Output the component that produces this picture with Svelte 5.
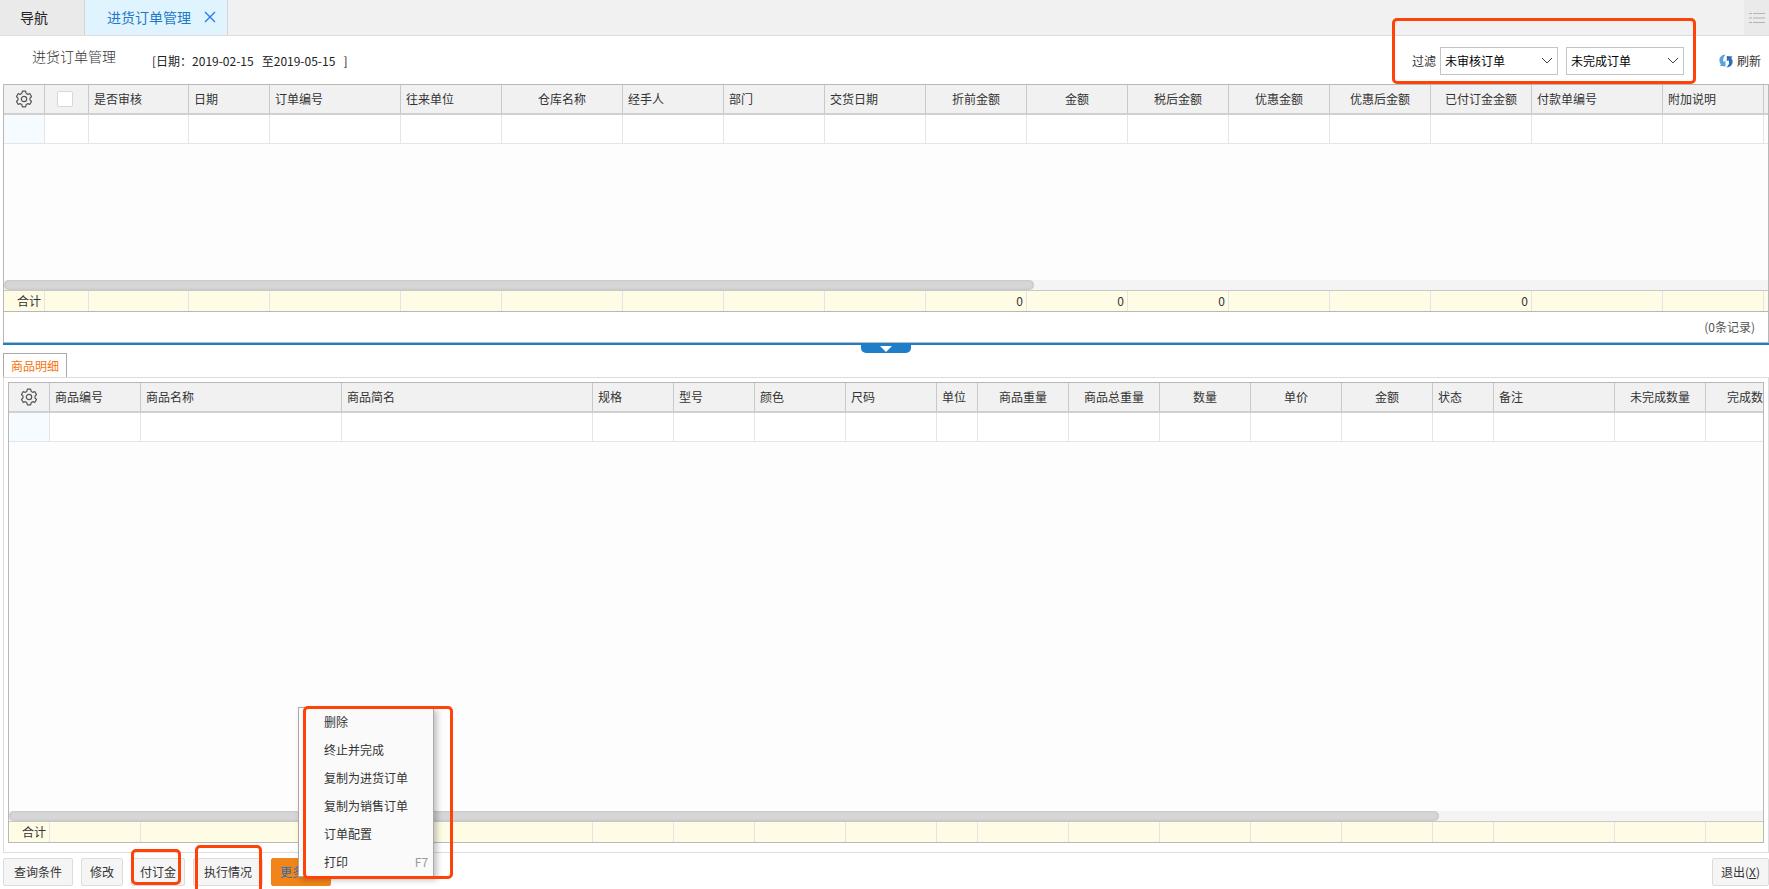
<script>
  const orderColumns = [
    { title: "", width: 41 },
    { title: "", width: 44, check: true },
    { title: "是否审核", width: 100 },
    { title: "日期", width: 81 },
    { title: "订单编号", width: 131 },
    { title: "往来单位", width: 101 },
    { title: "仓库名称", width: 121, center: true },
    { title: "经手人", width: 101 },
    { title: "部门", width: 101 },
    { title: "交货日期", width: 101 },
    { title: "折前金额", width: 101, center: true, total: 0 },
    { title: "金额", width: 101, center: true, total: 0 },
    { title: "税后金额", width: 101, center: true, total: 0 },
    { title: "优惠金额", width: 101, center: true },
    { title: "优惠后金额", width: 101, center: true },
    { title: "已付订金金额", width: 101, center: true, total: 0 },
    { title: "付款单编号", width: 131 },
    { title: "附加说明", width: 101 },
    { title: "", width: 101 }
  ]
  const detailColumns = [
    { title: "", width: 41 },
    { title: "商品编号", width: 91 },
    { title: "商品名称", width: 201 },
    { title: "商品简名", width: 251 },
    { title: "规格", width: 81 },
    { title: "型号", width: 81 },
    { title: "颜色", width: 91 },
    { title: "尺码", width: 91 },
    { title: "单位", width: 41 },
    { title: "商品重量", width: 91, center: true },
    { title: "商品总重量", width: 91, center: true },
    { title: "数量", width: 91, center: true },
    { title: "单价", width: 91, center: true },
    { title: "金额", width: 91, center: true },
    { title: "状态", width: 61 },
    { title: "备注", width: 121 },
    { title: "未完成数量", width: 91, center: true },
    { title: "完成数量", width: 91, center: true }
  ]
  const menu = [
    { text: "删除" },
    { text: "终止并完成" },
    { text: "复制为进货订单" },
    { text: "复制为销售订单" },
    { text: "订单配置" },
    { text: "打印", key: "F7" }
  ]
  let audit = $state("未审核订单")
  let finish = $state("未完成订单")
  let menuOpen = $state(true)

  const sum = cols => cols.reduce((a, c) => a + c.width, 0)
</script>

{#snippet cols(columns)}
  <colgroup>
    {#each columns as c}
      <col style="width: {c.width}px">
    {/each}
  </colgroup>
{/snippet}

{#snippet grid(columns, thumb)}
  <table style="width: {sum(columns)}px">
    {@render cols(columns)}
    <thead>
      <tr>
        {#each columns as c, i}
          <th class:center={c.center || i == 0} class:check={c.check}>
            {#if i == 0}
              <button class="gear" aria-label="列配置">
                <svg width="18" height="18" viewBox="0 0 18 18" fill="none" stroke="#555" stroke-width="1.2" stroke-linejoin="round">
                  <path d="M7.4 1.2h3.2l.6 2.2 1.5.9 2.2-.6 1.6 2.8L15 8.1v1.8l1.5 1.6-1.6 2.8-2.2-.6-1.5.9-.6 2.2H7.4l-.6-2.2-1.5-.9-2.2.6-1.6-2.8L3 9.9V8.1L1.5 6.5l1.6-2.8 2.2.6 1.5-.9z" />
                  <circle cx="9" cy="9" r="2.7" />
                </svg>
              </button>
            {:else if c.check}
              <input type="checkbox" aria-label="全选">
            {:else}
              {c.title}
            {/if}
          </th>
        {/each}
      </tr>
    </thead>
    <tbody>
      <tr>
        {#each columns as c}
          <td></td>
        {/each}
      </tr>
    </tbody>
  </table>
  <div class="space"></div>
  <div class="track"><div class="thumb" style="width: {thumb}%"></div></div>
  <table class="totals" style="width: {sum(columns)}px">
    {@render cols(columns)}
    <tbody>
      <tr>
        {#each columns as c, i}
          <td>{i == 0 ? "合计" : c.total ?? ""}</td>
        {/each}
      </tr>
    </tbody>
  </table>
{/snippet}

<main>
  <nav>
    <a class="tab" href="#home">导航</a>
    <div class="tab active">
      <a href="#orders">进货订单管理</a>
      <button aria-label="关闭">
        <svg width="12" height="12" viewBox="0 0 12 12" stroke="#2b78f0" stroke-width="1.4">
          <path d="M1 1l10 10M11 1L1 11" />
        </svg>
      </button>
    </div>
    <button class="list" aria-label="标签列表">
      <svg width="16" height="12" viewBox="0 0 16 12">
        <path d="M0 1h3v1H0zM4 1h12v1H4zM0 10h3v1H0zM4 10h12v1H4z" fill="#b4b4b4" />
        <path d="M0 5h3v2H0zM4 5h12v2H4z" fill="#cfcfcf" />
      </svg>
    </button>
  </nav>

  <header>
    <h1>进货订单管理</h1>
    <span class="range">[日期：2019-02-15&nbsp;&nbsp;&nbsp;至2019-05-15&nbsp;&nbsp;&nbsp;]</span>
    <div class="filter">
      <label for="audit">过滤</label>
      <div class="select">
        <select id="audit" bind:value={audit}>
          <option>未审核订单</option>
          <option>已审核订单</option>
        </select>
        <svg width="12" height="8" viewBox="0 0 12 8" fill="none" stroke="#444"><path d="M1 1l5 5 5-5" /></svg>
      </div>
      <div class="select">
        <select aria-label="完成状态" bind:value={finish}>
          <option>未完成订单</option>
          <option>已完成订单</option>
        </select>
        <svg width="12" height="8" viewBox="0 0 12 8" fill="none" stroke="#444"><path d="M1 1l5 5 5-5" /></svg>
      </div>
      <div class="mark"></div>
    </div>
    <button class="refresh">
      <svg width="14" height="14" viewBox="0 0 14 14">
        <path d="M6.500 .5C3 .6.400 3 .4 6.200c0 1.700.6 3 1.600 4L.8 11.800l5.700.7V6.800L4.900 8C3.600 6.200 4 3.400 6.500.5z" fill="#5aa2dc" />
        <path d="M7.500 13.500c3.500-.1 6.100-2.500 6.100-5.700 0-1.400-.5-2.600-1.400-3.500L13.500 2.500 7.800 2v5.200l1.600-1c1.300 1.900.8 4.800-1.900 7.300z" fill="#2d6db8" />
      </svg>
      刷新
    </button>
  </header>

  <section class="orders">
    <div class="grid">
      {@render grid(orderColumns, 58.4)}
    </div>
    <div class="count">(0条记录)</div>
  </section>
  <div class="splitter">
    <button aria-label="收起">
      <svg width="12" height="6" viewBox="0 0 12 6" fill="#fff"><path d="M0 0h12L6 6z" /></svg>
    </button>
  </div>

  <div class="subtabs"><button>商品明细</button></div>
  <section class="details">
    <div class="grid boxed">
      {@render grid(detailColumns, 81.5)}
    </div>
  </section>

  <footer>
    <button>查询条件</button>
    <button class="short">修改</button>
    <span class="wrap pay"><button class="short">付订金</button><span class="mark"></span></span>
    <span class="wrap run"><button>执行情况</button><span class="mark"></span></span>
    <div class="wrap">
      <button class="more" onclick={() => menuOpen = !menuOpen}>更多操作</button>
      {#if menuOpen}
        <div class="menu">
          {#each menu as m}
            <button>{m.text}{#if m.key}<kbd>{m.key}</kbd>{/if}</button>
          {/each}
          <div class="mark"></div>
        </div>
      {/if}
    </div>
    <button class="short exit">退出(<u>X</u>)</button>
  </footer>
</main>

<style>
  :global(body) {
    margin: 0;
    background: #fff;
  }
  main {
    display: flex;
    flex-direction: column;
    height: 100vh;
    overflow: hidden;
    font-family: "Noto Sans CJK SC", sans-serif;
    font-size: 12px;
    line-height: 18px;
    color: #333;
  }
  main * {
    box-sizing: border-box;
  }
  button {
    font: inherit;
    color: inherit;
    padding: 0;
    border: 0;
    background: none;
    cursor: pointer;
  }
  svg {
    display: block;
  }
  a {
    color: inherit;
    text-decoration: none;
  }
  .mark {
    position: absolute;
    border: 3px solid #ff4208;
    border-radius: 5px;
    pointer-events: none;
  }

  nav {
    display: flex;
    flex: none;
    height: 36px;
    background: #f1f1f1;
    border-bottom: 1px solid #ddd;
    font-size: 14px;
  }
  .tab {
    display: flex;
    align-items: center;
    gap: 13px;
    padding: 0 36px 1px 20px;
    background: #eaeaea;
    border-right: 1px solid #d4d4d4;
    color: #222;
  }
  .active {
    padding: 0 11px 1px 22px;
    background: #e0f4ff;
    color: #1f78c4;
  }
  .list {
    display: flex;
    align-items: center;
    margin-left: auto;
    padding: 0 4px 0 5px;
    background: #eaeaea;
  }

  header {
    display: flex;
    flex: none;
    align-items: center;
    height: 48px;
    padding: 2px 8px 0 32px;
  }
  h1 {
    margin: 0;
    padding-bottom: 10px;
    font-size: 14px;
    font-weight: 300;
  }
  .range {
    margin-left: 36px;
    color: #222;
  }
  .filter {
    position: relative;
    display: flex;
    align-items: center;
    gap: 8px;
    margin-left: auto;
  }
  .filter label {
    margin-right: -4px;
  }
  .filter .mark {
    inset: -29px -12px -9px -20px;
  }
  .select {
    position: relative;
  }
  .select svg {
    position: absolute;
    right: 5px;
    top: 10px;
    pointer-events: none;
  }
  select {
    appearance: none;
    display: block;
    width: 118px;
    height: 28px;
    padding: 0 4px;
    border: 1px solid #c4c4c4;
    border-radius: 0;
    background: #fff;
    color: #000;
    font: inherit;
  }
  .refresh {
    display: flex;
    align-items: center;
    gap: 4px;
    margin-left: 35px;
  }

  .orders {
    flex: none;
    margin-left: 3px;
    border: 1px solid #b8b8b8;
  }
  .grid {
    display: flex;
    flex-direction: column;
    overflow: hidden;
    background: #fdfdfd;
  }
  .orders .grid {
    height: 227px;
    border-bottom: 1px solid #b8b8b8;
  }
  table {
    flex: none;
    table-layout: fixed;
    border-spacing: 0;
  }
  th {
    height: 30px;
    padding: 0 5px;
    overflow: hidden;
    border-right: 1px solid #c8c8c8;
    border-bottom: 2px solid #d0d0d0;
    background: #f1f1f1;
    font-weight: 400;
    text-align: left;
    white-space: nowrap;
  }
  .center {
    padding: 0;
    text-align: center;
  }
  .check {
    padding: 0 12px;
  }
  td {
    height: 29px;
    padding: 0;
    border-right: 1px solid #e5e5e5;
    border-bottom: 1px solid #e5e5e5;
    background: #fff;
  }
  td:first-child {
    background: #f6fbff;
  }
  .gear {
    display: block;
    margin: 0 auto;
  }
  input {
    appearance: none;
    display: block;
    width: 16px;
    height: 16px;
    margin: 0;
    border: 1px solid #d8d8d8;
    border-radius: 2px;
    background: #fff;
  }
  .space {
    flex: 1;
  }
  .track {
    flex: none;
    height: 10px;
    background: #f4f4f4;
  }
  .thumb {
    height: 10px;
    border-radius: 5px;
    background: #d6d6d6;
    box-shadow: inset 0 0 3px #bbb;
  }
  .totals {
    border-top: 1px solid #c8c8c8;
  }
  .totals td {
    height: 20px;
    padding: 0 3px;
    border-bottom: 0;
    background: #fffce6;
    text-align: right;
  }
  .count {
    padding: 6px 13px;
    text-align: right;
    color: #555;
  }

  .splitter {
    position: relative;
    flex: none;
    height: 2px;
    margin-left: 3px;
    background: #1f7ec8;
  }
  .splitter button {
    position: absolute;
    top: 2px;
    left: calc(50% - 25px);
    width: 50px;
    height: 8px;
    border-radius: 0 0 5px 5px;
    background: #1f7ec8;
  }
  .splitter svg {
    margin: 0 auto;
  }

  .subtabs {
    flex: none;
    margin: 8px 0 0 3px;
  }
  .subtabs button {
    display: block;
    height: 24px;
    padding: 0 7px;
    border: 1px solid #aaa;
    border-bottom: 0;
    color: #f5750f;
  }
  .details {
    display: flex;
    flex: 1;
    min-height: 0;
    margin-left: 3px;
    padding: 4px 4px 9px;
    border: 1px solid #ddd;
  }
  .boxed {
    flex: 1;
    min-width: 0;
    border: 1px solid #b8b8b8;
  }

  footer {
    display: flex;
    flex: none;
    gap: 8px;
    padding: 5px 0 3px 3px;
  }
  .wrap {
    position: relative;
    display: flex;
  }
  footer > button,
  .wrap > button {
    height: 28px;
    padding: 0 10px;
    border: 1px solid #ddd;
    border-radius: 2px;
    background: #f5f5f5;
  }
  footer .short {
    padding: 0 8px;
  }
  .pay .mark {
    inset: -9px 4px 1px 0;
  }
  .run .mark {
    inset: -13px 1px -8px 2px;
  }
  .wrap > .more {
    width: 60px;
    padding: 0 8px;
    overflow: hidden;
    border-color: #f08519;
    background: #f08519;
    color: #2c6cb0;
    text-align: left;
    white-space: nowrap;
  }
  .exit {
    margin-left: auto;
  }
  .menu {
    position: absolute;
    left: 27px;
    bottom: 9px;
    width: 136px;
    border: 1px solid #aaa;
    background: #fafafa;
    box-shadow: 3px 3px 6px rgba(0, 0, 0, 0.25);
  }
  .menu button {
    display: flex;
    justify-content: space-between;
    align-items: center;
    width: 100%;
    height: 28px;
    padding: 0 5px 0 25px;
  }
  kbd {
    font: inherit;
    color: #999;
  }
  .menu .mark {
    inset: -2px -20px -3px 4px;
  }
</style>
